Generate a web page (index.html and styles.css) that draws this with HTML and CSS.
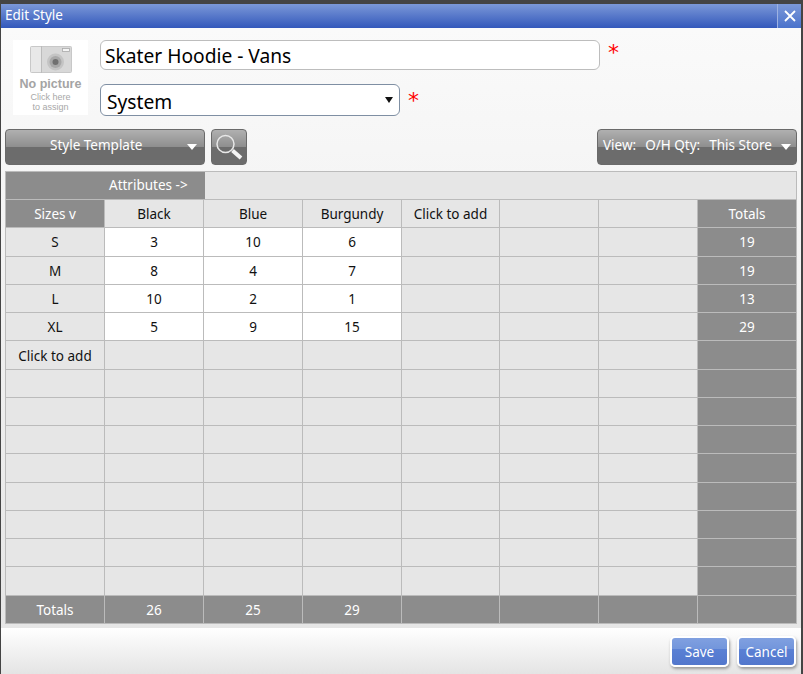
FILE: index.html
```html
<!DOCTYPE html>
<html lang="en">
  <head>
    <meta charset="UTF-8" />
    <title>Edit Style</title>
    <link rel="stylesheet" href="styles.css">
  </head>
  <body>
    <div class="dialog">
      <div class="dialog__title">
        <span class="dialog__title__text">Edit Style</span>
        <span class="dialog__close">
          <svg width="14" height="14" viewBox="0 0 14 14">
            <path d="M2 2 L12 12 M12 2 L2 12" stroke="#fff" stroke-width="1.8" fill="none" />
          </svg>
        </span>
      </div>

      <div class="dialog__body">
        <div class="style-head">
          <div class="picture">
            <svg class="picture__camera" width="44" height="28" viewBox="0 0 44 28">
              <rect x="1.5" y="1.5" width="41" height="26" rx="1" fill="#d8d8d8" stroke="#c8c8c8" />
              <rect x="2" y="2" width="10" height="25" fill="#e8e8e8" />
              <rect x="12" y="1" width="1" height="27" fill="#bcbcbc" />
              <rect x="33.5" y="3.5" width="7" height="3" fill="#f4f4f4" stroke="#aaa" stroke-width="0.8" />
              <circle cx="26.5" cy="17" r="8.5" fill="#c4c4c4" />
              <circle cx="26.5" cy="17" r="6" fill="#a8a8a8" />
              <circle cx="26.5" cy="17" r="3" fill="#707070" />
            </svg>
            <div class="picture__none">No picture</div>
            <div class="picture__hint">Click here<br />to assign</div>
          </div>
          <div class="style-head__fields">
            <div class="field">
              <input class="field__name" type="text" value="Skater Hoodie - Vans" />
              <span class="field__req">*</span>
            </div>
            <div class="field">
              <div class="field__select">
                <span class="field__select__text">System</span>
                <span class="field__arrow"></span>
              </div>
              <span class="field__req field__req--low">*</span>
            </div>
          </div>
        </div>

        <div class="toolbar">
          <div class="toolbar__btn toolbar__btn--template">
            <span class="toolbar__label">Style Template</span>
            <span class="toolbar__arrow"></span>
          </div>
          <div class="toolbar__btn toolbar__btn--search">
            <svg width="32" height="30" viewBox="0 0 32 30">
              <circle cx="12.5" cy="12" r="8.5" fill="none" stroke="#e8e8e8" stroke-width="1.5" />
              <path d="M19.5 18.5 L28 26" stroke="#f4f4f4" stroke-width="4" />
            </svg>
          </div>
          <div class="toolbar__spacer"></div>
          <div class="toolbar__btn toolbar__btn--view">
            <span class="toolbar__view">
              <span>View:</span>
              <span>O/H Qty:</span>
              <span>This Store</span>
            </span>
            <span class="toolbar__arrow"></span>
          </div>
        </div>

        <div class="matrix-wrap">
          <div class="matrix">
            <div class="matrix__attrs">
              <div class="matrix__attrs__label">Attributes -&gt;</div>
            </div>
            <table class="grid">
              <colgroup>
                <col class="col" /><col class="col" /><col class="col" /><col class="col" />
                <col class="col col--narrow" /><col class="col" /><col class="col" /><col class="col" />
              </colgroup>
              <tr>
                <td class="dark">Sizes v</td>
                <td>Black</td><td>Blue</td><td>Burgundy</td><td>Click to add</td><td></td><td></td>
                <td class="dark">Totals</td>
              </tr>
              <tr class="tall">
                <td>S</td>
                <td class="val">3</td><td class="val">10</td><td class="val">6</td><td></td><td></td><td></td>
                <td class="dark">19</td>
              </tr>
              <tr>
                <td>M</td>
                <td class="val">8</td><td class="val">4</td><td class="val">7</td><td></td><td></td><td></td>
                <td class="dark">19</td>
              </tr>
              <tr>
                <td>L</td>
                <td class="val">10</td><td class="val">2</td><td class="val">1</td><td></td><td></td><td></td>
                <td class="dark">13</td>
              </tr>
              <tr>
                <td>XL</td>
                <td class="val">5</td><td class="val">9</td><td class="val">15</td><td></td><td></td><td></td>
                <td class="dark">29</td>
              </tr>
              <tr class="tall">
                <td class="add">Click to add</td>
                <td></td><td></td><td></td><td></td><td></td><td></td>
                <td class="dark"></td>
              </tr>
              <tr><td></td><td></td><td></td><td></td><td></td><td></td><td></td><td class="dark"></td></tr>
              <tr><td></td><td></td><td></td><td></td><td></td><td></td><td></td><td class="dark"></td></tr>
              <tr><td></td><td></td><td></td><td></td><td></td><td></td><td></td><td class="dark"></td></tr>
              <tr class="tall"><td></td><td></td><td></td><td></td><td></td><td></td><td></td><td class="dark"></td></tr>
              <tr><td></td><td></td><td></td><td></td><td></td><td></td><td></td><td class="dark"></td></tr>
              <tr><td></td><td></td><td></td><td></td><td></td><td></td><td></td><td class="dark"></td></tr>
              <tr><td></td><td></td><td></td><td></td><td></td><td></td><td></td><td class="dark"></td></tr>
              <tr class="tall"><td></td><td></td><td></td><td></td><td></td><td></td><td></td><td class="dark"></td></tr>
              <tr>
                <td class="dark">Totals</td>
                <td class="dark">26</td><td class="dark">25</td><td class="dark">29</td>
                <td class="dark"></td><td class="dark"></td><td class="dark"></td><td class="dark"></td>
              </tr>
            </table>
          </div>
        </div>
      </div>

      <div class="dialog__footer">
        <div class="footer__btn">Save</div>
        <div class="footer__btn">Cancel</div>
      </div>
    </div>
  </body>
</html>
```

FILE: styles.css
```css
* {
  margin: 0;
  padding: 0;
  box-sizing: border-box;
}

body {
  background: #444;
  font-family: "Noto Sans", "Open Sans", sans-serif;
  font-size: 13.5px;
  color: #111;
  height: 674px;
  overflow: hidden;
}

.dialog {
  width: 800px;
  height: 670px;
  margin: 4px 0 0 1px;
  display: flex;
  flex-direction: column;
}

.dialog__title {
  height: 24px;
  flex: none;
  display: flex;
  justify-content: space-between;
  background: linear-gradient(#7b98d8, #3358bb);
  color: #fff;
}
.dialog__title__text {
  padding: 2px 0 0 4px;
}
.dialog__close {
  width: 24px;
  display: flex;
  align-items: center;
  justify-content: center;
  background: linear-gradient(#7b98d8, #4a72cc);
  border-left: 1px solid #9db2e2;
}

.dialog__body {
  flex: 1;
  display: flex;
  flex-direction: column;
  background: linear-gradient(#fafafa, #e6e6e6);
}

.style-head {
  display: flex;
  padding: 12px 0 0 12px;
  height: 101px;
}

.picture {
  width: 75px;
  height: 75px;
  background: #fff;
  display: flex;
  flex-direction: column;
  align-items: center;
  padding-top: 5px;
  text-align: center;
  font-family: "Liberation Sans", sans-serif;
}
.picture__camera {
  flex: none;
}
.picture__none {
  font-size: 12.5px;
  font-weight: bold;
  line-height: 15px;
  margin-top: 3.5px;
  color: #a4a4a4;
}
.picture__hint {
  font-size: 9px;
  line-height: 10.4px;
  margin-top: 0.5px;
  color: #a8a8a8;
}

.style-head__fields {
  margin-left: 12px;
  display: flex;
  flex-direction: column;
  gap: 14px;
}

.field {
  display: flex;
}
.field__name {
  width: 500px;
  height: 30px;
  background: #fff;
  border: 1px solid #bdbdbd;
  border-radius: 6px;
  padding: 0 4px;
  font: 19.2px "Noto Sans", sans-serif;
  color: #000;
  outline: none;
}
.field__select {
  width: 300px;
  height: 32px;
  background: #fff;
  border: 1px solid #7f8fa3;
  border-radius: 6px;
  padding: 0 6px;
  display: flex;
  align-items: center;
  justify-content: space-between;
  font-size: 19.2px;
  color: #000;
}
.field__select__text {
  padding-top: 3px;
}
.field__arrow {
  border-left: 4px solid transparent;
  border-right: 4px solid transparent;
  border-top: 6px solid #111;
}
.field__req {
  margin-left: 8px;
  font-family: "DejaVu Sans", sans-serif;
  font-size: 22px;
  line-height: 26px;
  color: #f00;
}
.field__req--low {
  padding-top: 4px;
}

.toolbar {
  display: flex;
  gap: 6px;
  padding: 0 4px;
  height: 36px;
  flex: none;
}
.toolbar__spacer {
  flex: 1;
}
.toolbar__btn {
  height: 36px;
  display: flex;
  align-items: center;
  border: 1px solid #6a6a6a;
  border-radius: 4px;
  background: linear-gradient(#b0b0b0, #8e8e8e 50%, #6c6c6c 50%, #6c6c6c);
  color: #fff;
}
.toolbar__btn--template {
  width: 200px;
  padding: 0 7px 4px 44px;
  justify-content: space-between;
}
.toolbar__btn--search {
  width: 36px;
  justify-content: center;
}
.toolbar__btn--view {
  width: 200px;
  padding: 0 5px 4px;
  justify-content: space-between;
}
.toolbar__view {
  display: flex;
  gap: 9px;
}
.toolbar__arrow {
  border-left: 5px solid transparent;
  border-right: 5px solid transparent;
  border-top: 6px solid #fff;
  margin-top: 4px;
}

.matrix-wrap {
  flex: 1;
  padding: 6px 4px 0;
}
.matrix {
  width: 792px;
  border-top: 1px solid #bbb;
  background: #e6e6e6;
}
.matrix__attrs {
  height: 27px;
  border-left: 1px solid #bbb;
  border-right: 1px solid #bbb;
}
.matrix__attrs__label {
  width: 199px;
  height: 27px;
  line-height: 27px;
  padding-left: 103px;
  background: #8c8c8c;
  color: #fff;
}

.grid {
  width: 792px;
  border-collapse: collapse;
  table-layout: fixed;
}
.col {
  width: 99px;
}
.col--narrow {
  width: 98px;
}
.grid tr {
  height: 28px;
}
.grid tr.tall {
  height: 29px;
}
.grid td {
  border: 1px solid #bbb;
  background: #e6e6e6;
  text-align: center;
  padding: 0;
}
.grid td.val {
  background: #fff;
}
.grid td.dark {
  background: #8c8c8c;
  color: #fff;
}
.grid td.add {
  padding-top: 2px;
}

.dialog__footer {
  height: 46px;
  flex: none;
  display: flex;
  justify-content: flex-end;
  gap: 8px;
  padding: 8px 5px 0 0;
  background: linear-gradient(#fff, #e4e4e4);
}
.footer__btn {
  width: 59px;
  height: 31px;
  display: flex;
  align-items: center;
  justify-content: center;
  border: 2px solid #fff;
  border-radius: 5px;
  background: linear-gradient(#80a0e0, #7396dc 40%, #5a80d4 42%, #5277cc);
  box-shadow: 1px 2px 3px #999;
  color: #fff;
}
```
